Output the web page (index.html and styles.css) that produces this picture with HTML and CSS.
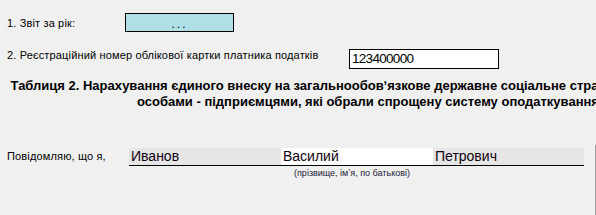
FILE: index.html
```html
<!DOCTYPE html>
<html lang="uk">
<head>
    <meta charset="UTF-8">
    <meta name="viewport" content="width=device-width, initial-scale=1.0">
    <title>Звіт</title>
    <link rel="stylesheet" href="styles.css">
</head>
<body>
    <div class="form">
        <div class="row row-year">
            <div class="label label-year">1. Звіт за рік:</div>
            <div class="box box-year">...</div>
        </div>
        <div class="row row-reg">
            <div class="label label-reg">2. Реєстраційний номер облікової картки платника податків</div>
            <div class="box box-reg">123400000</div>
        </div>
        <div class="title">
            Таблиця 2. Нарахування єдиного внеску на загальнообовʼязкове державне соціальне страхування фізичними<br>
            особами - підприємцями, які обрали спрощену систему оподаткування
        </div>
        <div class="person">
            <div class="row row-name">
                <div class="label label-name">Повідомляю, що я,</div>
                <div class="names">
                    <div class="field">Иванов</div>
                    <div class="field field-active">Василий</div>
                    <div class="field">Петрович</div>
                </div>
            </div>
            <div class="hint">(прізвище, імʼя, по батькові)</div>
        </div>
    </div>
</body>
</html>
```

FILE: styles.css
```css
body {
    margin: 0;
    padding: 0;
    background: #f0f0f0;
    font-family: "Liberation Sans", Arial, sans-serif;
    font-size: 11px;
    color: #000;
    overflow: hidden;
}

.form {
    width: 596px;
    height: 215px;
    overflow: hidden;
}

.row {
    display: flex;
}

.label {
    padding-left: 7px;
    line-height: 14px;
    letter-spacing: 0.15px;
    white-space: nowrap;
}

.box {
    border: 1px solid #000;
    box-sizing: border-box;
}

.row-year {
    padding-top: 13px;
    align-items: center;
}

.label-year {
    width: 118px;
}

.box-year {
    width: 109px;
    height: 19px;
    background: #b0e0e6;
    text-align: center;
    font-size: 12px;
    line-height: 20px;
    letter-spacing: 2px;
}

.row-reg {
    margin-top: 17px;
    align-items: flex-start;
}

.label-reg {
    width: 342px;
    margin-top: -1px;
}

.box-reg {
    width: 150px;
    height: 20px;
    background: #fff;
    padding-left: 2px;
    font-size: 13.5px;
    line-height: 18px;
    letter-spacing: -0.7px;
}

.title {
    width: 736px;
    margin-top: 9px;
    text-align: center;
    font-weight: bold;
    font-size: 13px;
    line-height: 16px;
    white-space: nowrap;
}

.person {
    margin-top: 35px;
    height: 72px;
    border-right: 1px solid #a0a0a0;
    box-sizing: border-box;
    padding-top: 3px;
}

.label-name {
    width: 122px;
    margin-top: 1px;
}

.names {
    display: flex;
    border-bottom: 1px solid #000;
}

.field {
    width: 152px;
    height: 17px;
    padding-left: 2px;
    box-sizing: border-box;
    background: #e6e6e6;
    font-size: 14px;
    line-height: 17px;
    color: #100010;
}

.field:last-child {
    width: 151px;
}

.field-active {
    background: #fff;
}

.hint {
    padding-left: 294px;
    margin-top: 2px;
    font-size: 9px;
    line-height: 10px;
    color: #1a1a3a;
}
```
